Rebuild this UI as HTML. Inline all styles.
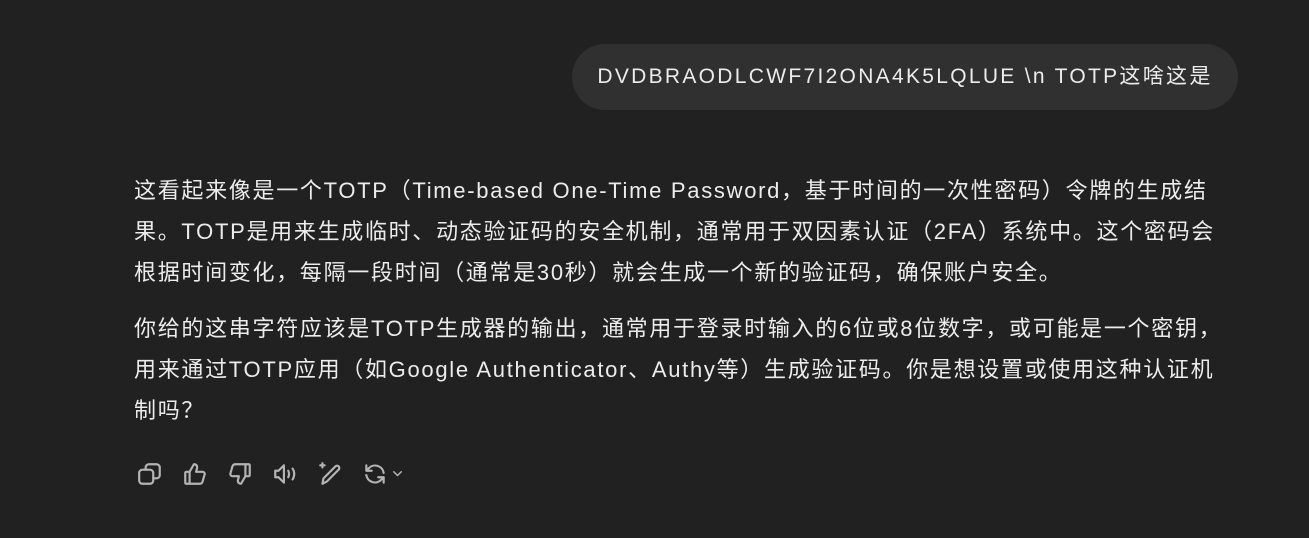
<!DOCTYPE html>
<html><head><meta charset="utf-8"><style>
body{margin:0;width:1309px;height:538px;background:#212121;font-family:"Liberation Sans","Noto Sans CJK SC",sans-serif;color:#ececec;overflow:hidden;position:relative}
.bubble{position:absolute;left:572px;top:44px;width:666px;height:66px;border-radius:33px;background:#303030;font-size:21px;letter-spacing:2.3px;line-height:66px;text-align:center;color:#ececec}
.p{position:absolute;left:134px;font-size:22px;letter-spacing:1.7px;line-height:41px;white-space:nowrap}
.icons{position:absolute;left:137px;top:461px;display:flex;gap:0}
.icons svg{width:26px;height:26px;margin-right:19px;stroke:#b4b4b4;fill:none;stroke-width:2;stroke-linecap:round;stroke-linejoin:round}
</style></head><body>
<div class="bubble">DVDBRAODLCWF7I2ONA4K5LQLUE \n TOTP这啥这是</div>
<div class="p" style="top:170px">这看起来像是一个TOTP（Time-based One-Time Password，基于时间的一次性密码）令牌的生成结<br>果。TOTP是用来生成临时、动态验证码的安全机制，通常用于双因素认证（2FA）系统中。这个密码会<br>根据时间变化，每隔一段时间（通常是30秒）就会生成一个新的验证码，确保账户安全。</div>
<div class="p" style="top:308px">你给的这串字符应该是TOTP生成器的输出，通常用于登录时输入的6位或8位数字，或可能是一个密钥，<br>用来通过TOTP应用（如Google Authenticator、Authy等）生成验证码。你是想设置或使用这种认证机<br>制吗？</div>
<div class="icons">
<svg viewBox="0 0 24 24"><rect x="2" y="8" width="13" height="13" rx="3"/><path d="M8 8V6a3 3 0 0 1 3-3h7a3 3 0 0 1 3 3v7a3 3 0 0 1-3 3h-3"/></svg>
<svg viewBox="0 0 24 24"><path d="M7 10v11H4a1 1 0 0 1-1-1v-9a1 1 0 0 1 1-1h3l4-7c2 0 3 1 3 3l-1 4h6a2 2 0 0 1 2 2l-2 7a3 3 0 0 1-3 2H7"/></svg>
<svg viewBox="0 0 24 24"><path d="M17 14V3h3a1 1 0 0 1 1 1v9a1 1 0 0 1-1 1h-3l-4 7c-2 0-3-1-3-3l1-4H5a2 2 0 0 1-2-2l2-7a3 3 0 0 1 3-2h9"/></svg>
<svg viewBox="0 0 24 24"><path d="M3 9h3l5-5v16l-5-5H3z"/><path d="M15 9c1 2 1 4 0 6M19 7c2 3 2 7 0 10"/></svg>
<svg viewBox="0 0 24 24"><path d="M5 21l1-5L17 5a2 2 0 0 1 3 3L9 19z"/><path d="M5 2v4M3 4h4"/></svg>
<svg viewBox="0 0 24 24" style="margin-right:2px"><path d="M20 11a8 8 0 0 0-14-4L4 9M4 4v5h5M4 13a8 8 0 0 0 14 4l2-2M20 20v-5h-5"/></svg>
<svg viewBox="0 0 24 24" style="width:18px"><path d="M5 9l5 5 5-5"/></svg>
</div>
</body></html>
